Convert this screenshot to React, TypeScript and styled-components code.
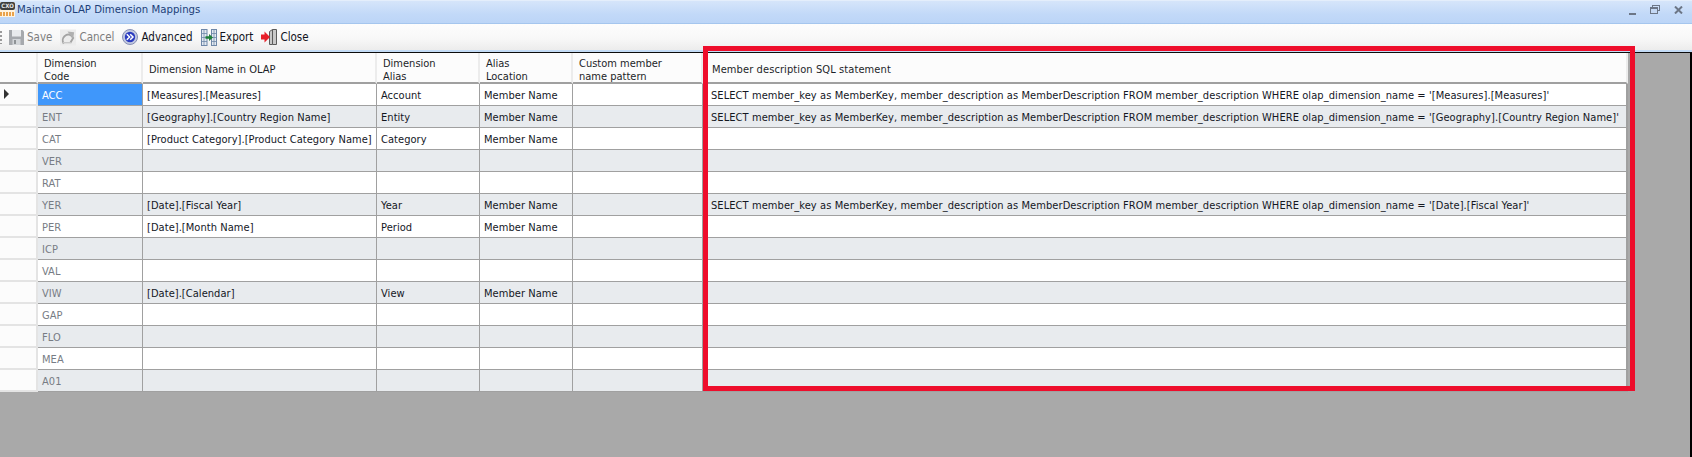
import React from "react";
import styled, { createGlobalStyle } from "styled-components";

const Global = createGlobalStyle`
  html, body { margin: 0; padding: 0; background: #a9a9a9; }
  body { font-family: "DejaVu Sans Condensed", "DejaVu Sans", sans-serif; font-stretch: condensed; }
`;

const Page = styled.div`
  position: relative;
  width: 1692px;
  height: 457px;
  overflow: hidden;
  display: flex;
  flex-direction: column;
  background: #a9a9a9;
`;

const TitleBar = styled.div`
  height: 23px;
  display: flex;
  align-items: center;
  background: linear-gradient(#d6e5fa, #c2d9f8 60%, #bcd5f7);
  border-top: 1px solid #e4eefb;
  box-sizing: border-box;
  padding: 0 9px 5px 0;
`;

const AppLogo = styled.div`
  width: 15px;
  height: 15px;
  margin-right: 2px;
  display: flex;
  flex-direction: column;
  background: #fff3df;
  flex: none;
`;

const LogoTop = styled.div`
  height: 8px;
  background: #3e3e3e;
  border-radius: 2px;
  color: #e8e8e8;
  font-size: 6px;
  line-height: 8px;
  font-weight: bold;
  text-align: center;
`;

const LogoBottom = styled.div`
  flex: 1;
  margin: 2px 0 1px;
  background: repeating-linear-gradient(90deg, #e9a24b 0 2px, #fff3df 2px 3px);
`;

const Title = styled.span`
  font-size: 11.3px;
  color: #1d3f78;
  flex: 1;
`;

const WindowButtons = styled.div`
  display: flex;
  align-items: center;
  gap: 14px;
`;

const Toolbar = styled.div`
  height: 27px;
  display: flex;
  align-items: center;
  box-sizing: border-box;
  border-top: 1px solid #a5c6ee;
  background: linear-gradient(#fdfdfd, #f8f8f8 55%, #ececec);
  gap: 8px;
`;

const Grip = styled.div`
  width: 2px;
  height: 13px;
  margin-right: -1px;
  background: repeating-linear-gradient(#9a9a9a 0 2px, transparent 2px 4px);
`;

const ToolButton = styled.div<{ $disabled?: boolean }>`
  display: flex;
  align-items: center;
  gap: 3px;
  font-size: 11.5px;
  color: ${(p) => (p.$disabled ? "#7d7d7d" : "#10131c")};
`;

const Rule = styled.div`
  height: 3px;
  flex: none;
  background: linear-gradient(#c4dcf6 0 2px, #0c0c0c 2px);
`;

const Body = styled.div`
  flex: 1;
  display: flex;
  border-right: 2px solid #000;
  min-height: 0;
`;

const Grid = styled.div`
  width: 1628px;
  align-self: flex-start;
  display: grid;
  grid-template-columns: 38px 105px 234px 103px 93px 130px 925px;
  grid-template-rows: 31px;
  grid-auto-rows: 22px;
  background: #fff;
`;

const HeaderCell = styled.div<{ $last?: boolean }>`
  box-sizing: border-box;
  background: #fcfcfc;
  border-right: 2px solid #ececec;
  border-bottom: 2px solid #a0a0a0;
  padding: 4px 0 0 ${(p) => (p.$last ? "9px" : "6px")};
  display: flex;
  align-items: center;
  font-size: 11px;
  line-height: 13px;
  letter-spacing: ${(p) => (p.$last ? "0.1px" : "0")};
  color: #1c1f28;
  white-space: pre-line;
`;

const RowHead = styled.div`
  background: #fcfcfc;
  border-bottom: 2px solid #e4e4e4;
  border-right: 2px solid #e4e4e4;
  box-sizing: border-box;
  display: flex;
  align-items: center;
  padding-left: 4px;
`;

const Cell = styled.div<{ $alt: boolean; $selected?: boolean; $muted?: boolean }>`
  box-sizing: border-box;
  background: ${(p) => (p.$selected ? "#3f97fb" : p.$alt ? "#e8ebee" : "#fff")};
  color: ${(p) => (p.$selected ? "#fff" : p.$muted ? "#777c84" : "#14171f")};
  border-right: 1px solid #a0a0a0;
  border-bottom: 1px solid #a0a0a0;
  font-size: 11px;
  letter-spacing: 0.05px;
  padding: 1px 0 0 4px;
  display: flex;
  align-items: center;
  white-space: nowrap;
  overflow: hidden;
`;

const LastCell = styled(Cell)`
  border-right: 2px solid #a0a0a0;
  padding-left: 8px;
  letter-spacing: 0.08px;
`;

const Highlight = styled.div`
  position: absolute;
  left: 703px;
  top: 46px;
  width: 932px;
  height: 345px;
  box-sizing: border-box;
  border: 5px solid #ee0d2b;
  pointer-events: none;
`;

const Arrow = styled.div`
  width: 0;
  height: 0;
  border-left: 5px solid #333;
  border-top: 5px solid transparent;
  border-bottom: 5px solid transparent;
`;

const sql = (n: string) =>
  `SELECT member_key as MemberKey, member_description as MemberDescription FROM member_description WHERE olap_dimension_name = '${n}'`;

type Row = [string, string?, string?, string?, string?];

const rows: Row[] = [
  ["ACC", "[Measures].[Measures]", "Account", "Member Name", sql("[Measures].[Measures]")],
  ["ENT", "[Geography].[Country Region Name]", "Entity", "Member Name", sql("[Geography].[Country Region Name]")],
  ["CAT", "[Product Category].[Product Category Name]", "Category", "Member Name"],
  ["VER"],
  ["RAT"],
  ["YER", "[Date].[Fiscal Year]", "Year", "Member Name", sql("[Date].[Fiscal Year]")],
  ["PER", "[Date].[Month Name]", "Period", "Member Name"],
  ["ICP"],
  ["VAL"],
  ["VIW", "[Date].[Calendar]", "View", "Member Name"],
  ["GAP"],
  ["FLO"],
  ["MEA"],
  ["A01"],
];

const headers = [
  "",
  "Dimension\nCode",
  "Dimension Name in OLAP",
  "Dimension\nAlias",
  "Alias\nLocation",
  "Custom member\nname pattern",
  "Member description SQL statement",
];

const SaveIcon = () => (
  <svg width="15" height="16" viewBox="0 0 15 16">
    <path d="M0 1h13.5l1.5 1.5V16H0z" fill="#a6a9ad" />
    <rect x="3" y="1" width="9" height="6.5" fill="#e9ebed" />
    <rect x="3.5" y="10" width="8" height="6" fill="#d3d6d9" />
    <rect x="5" y="11" width="2" height="4" fill="#8f9396" />
  </svg>
);

const CancelIcon = () => (
  <svg width="16" height="17" viewBox="0 0 17 17">
    <rect width="17" height="17" fill="#ececec" />
    <path d="M4 15 A6 6 0 0 1 5 7 C8 4 12 5 14 9 L11 14" fill="none" stroke="#a3a3a3" strokeWidth="2" />
    <path d="M8 2 L15 3 L14 10z" fill="#b0b0b0" />
    <path d="M3 14 L12 14" stroke="#c6c6c6" strokeWidth="1.5" />
  </svg>
);

const AdvancedIcon = () => (
  <svg width="16" height="16" viewBox="0 0 16 16">
    <circle cx="8" cy="8" r="7.5" fill="#c3c9e0" stroke="#8790b4" />
    <circle cx="8" cy="8" r="5.2" fill="#2b3cc0" />
    <path d="M4.8 5.2l2.8 2.8-2.8 2.8M8.2 5.2l2.8 2.8-2.8 2.8" fill="none" stroke="#fff" strokeWidth="1.5" />
  </svg>
);

const ExportIcon = () => (
  <svg width="16" height="17" viewBox="0 0 16 17">
    <rect x="0.5" y="0.5" width="5.5" height="16" fill="#e3e9f0" stroke="#6f88a8" />
    <rect x="10.5" y="0.5" width="5" height="16" fill="#e3e9f0" stroke="#6f88a8" />
    <path d="M0.5 4.5h5.5M0.5 8.5h5.5M0.5 12.5h5.5M10.5 4.5h5M10.5 8.5h5M10.5 12.5h5M3 .5v16M13 .5v16" stroke="#6f88a8" strokeWidth="0.8" />
    <path d="M4.5 7.3h3.5V5l4 3.5-4 3.5V9.7H4.5z" fill="#1f7f38" />
  </svg>
);

const CloseIcon = () => (
  <svg width="16" height="16" viewBox="0 0 16 16">
    <path d="M8.5 2.5l3-2h4v15h-4l-3 0z" fill="#c9c9c9" stroke="#5b5b5b" />
    <path d="M11.5 .5v15" stroke="#5b5b5b" />
    <path d="M0 5.5h3.5V2.5L9 8l-5.5 5.5v-3H0z" fill="#e8202a" />
  </svg>
);

const Glyphs = () => (
  <WindowButtons>
    <svg width="7" height="14" viewBox="0 0 7 14">
      <rect x="0" y="10" width="7" height="2" fill="#6c7686" />
    </svg>
    <svg width="10" height="9" viewBox="0 0 10 9">
      <rect x="2.5" y="0.5" width="7" height="5" fill="none" stroke="#6c7686" />
      <rect x="0.5" y="2.5" width="7" height="6" fill="#c4d8f4" stroke="#6c7686" />
      <rect x="0" y="2" width="8" height="2" fill="#6c7686" />
    </svg>
    <svg width="9" height="8" viewBox="0 0 9 8">
      <path d="M1 0.5l7 7M8 0.5l-7 7" stroke="#6c7686" strokeWidth="2" />
    </svg>
  </WindowButtons>
);

export default function App() {
  return (
    <Page>
      <Global />
      <TitleBar>
        <AppLogo>
          <LogoTop>CXO</LogoTop>
          <LogoBottom />
        </AppLogo>
        <Title>Maintain OLAP Dimension Mappings</Title>
        <Glyphs />
      </TitleBar>
      <Toolbar>
        <Grip />
        <ToolButton $disabled>
          <SaveIcon />
          Save
        </ToolButton>
        <ToolButton $disabled>
          <CancelIcon />
          Cancel
        </ToolButton>
        <ToolButton>
          <AdvancedIcon />
          Advanced
        </ToolButton>
        <ToolButton>
          <ExportIcon />
          Export
        </ToolButton>
        <ToolButton>
          <CloseIcon />
          Close
        </ToolButton>
      </Toolbar>
      <Rule />
      <Body>
        <Grid>
          {headers.map((h, i) => (
            <HeaderCell key={i} $last={i === headers.length - 1}>
              {h}
            </HeaderCell>
          ))}
          {rows.map((r, i) => {
            const alt = i % 2 === 1;
            return (
              <React.Fragment key={r[0]}>
                <RowHead>{i === 0 && <Arrow />}</RowHead>
                <Cell $alt={alt} $selected={i === 0} $muted>
                  {r[0]}
                </Cell>
                <Cell $alt={alt}>{r[1]}</Cell>
                <Cell $alt={alt}>{r[2]}</Cell>
                <Cell $alt={alt}>{r[3]}</Cell>
                <Cell $alt={alt} />
                <LastCell $alt={alt}>{r[4]}</LastCell>
              </React.Fragment>
            );
          })}
        </Grid>
      </Body>
      <Highlight />
    </Page>
  );
}
